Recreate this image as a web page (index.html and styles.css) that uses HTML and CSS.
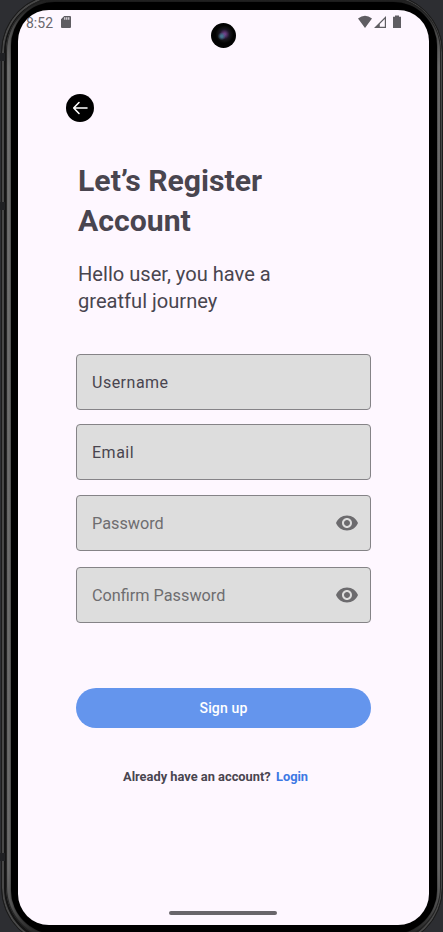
FILE: index.html
```html
<!DOCTYPE html>
<html lang="en">
<head>
<meta charset="utf-8">
<title>Register</title>
<link rel="stylesheet" href="styles.css">
</head>
<body>
<div class="device">
  <div class="rim"></div>
  <div class="shell"></div>
  <div class="bezel"></div>
  <span class="side-key key-top"></span>
  <span class="side-key key-mid"></span>
  <span class="side-key key-low"></span>
  <main class="screen">
    <header class="status">
      <span class="time">8:52</span>
      <svg class="sd" width="10" height="12" viewBox="0 0 10 12"><path fill="#5f5d62" fill-rule="evenodd" d="M3.2 0H9q1 0 1 1v10q0 1-1 1H1q-1 0-1-1V3.2zM3.3 1.3v2.5h1V1.3zm2 0v2.5h1V1.3zm2 0v2.5h1V1.3z"/></svg>
      <svg class="signals" width="44" height="14" viewBox="0 0 44 14"><path fill="#5f5d62" d="M0 3.5Q7-2.2 14 3.5L7 13zM28 1v12H16zM26.8 4 21.8 9V11.8h5z" fill-rule="evenodd"/><path fill="#5f5d62" d="M35 1.8h2V.4h4v1.4h2V13h-8z"/></svg>
    </header>
    <span class="camera"></span>
    <button class="back" aria-label="Back"><svg width="16" height="14" viewBox="0 0 16 14"><path d="M7 1.5 1.7 7 7 12.5M1.7 7H15" fill="none" stroke="#fff" stroke-width="1.6" stroke-linecap="round" stroke-linejoin="round"/></svg></button>
    <h1>Let’s Register<br>Account</h1>
    <p class="intro">Hello user, you have a<br>greatful journey</p>
    <form class="form">
      <div class="field">Username</div>
      <div class="field">Email</div>
      <div class="field secret">Password<svg class="eye" width="24" height="24" viewBox="0 0 24 24"><path d="M12 4.5C7 4.5 2.73 7.61 1 12c1.73 4.39 6 7.5 11 7.5s9.27-3.11 11-7.5c-1.73-4.39-6-7.5-11-7.5zM12 17c-2.76 0-5-2.24-5-5s2.24-5 5-5 5 2.24 5 5-2.24 5-5 5zm0-8c-1.66 0-3 1.34-3 3s1.34 3 3 3 3-1.34 3-3-1.34-3-3-3z"/></svg></div>
      <div class="field secret">Confirm Password<svg class="eye" width="24" height="24" viewBox="0 0 24 24"><path d="M12 4.5C7 4.5 2.73 7.61 1 12c1.73 4.39 6 7.5 11 7.5s9.27-3.11 11-7.5c-1.73-4.39-6-7.5-11-7.5zM12 17c-2.76 0-5-2.24-5-5s2.24-5 5-5 5 2.24 5 5-2.24 5-5 5zm0-8c-1.66 0-3 1.34-3 3s1.34 3 3 3 3-1.34 3-3-1.34-3-3-3z"/></svg></div>
      <button class="signup" type="button">Sign up</button>
    </form>
    <p class="login">Already have an account? <a>Login</a></p>
    <span class="home-bar"></span>
  </main>
</div>
</body>
</html>
```
FILE: styles.css
```css
* { box-sizing: border-box; }
body { margin: 0; background: #2d2e32; font-family: Roboto, sans-serif; color: #49454f; }
.device { position: relative; width: 443px; height: 932px; overflow: hidden; padding: 10px 14px 7px 18px; }
.rim {
  position: absolute; inset: -6px 0 -14px 1px; border-radius: 58px; background: #141414;
  border: 1px solid #1c1c1c; box-shadow: inset 0 0 0 2px #484848;
}
.shell {
  position: absolute; inset: -3px 2px -9px 6px; border-radius: 54px;
  background: linear-gradient(#1c1c1c, #505050 30px, #707070 70px, #6a6a6a 870px, #555 910px, #181818);
  box-shadow: inset 0 0 1px 1px #1f1f1f;
}
.bezel { position: absolute; inset: 2px 6px -2px 11px; border-radius: 44px; background: #000; box-shadow: 0 0 2px 0 #0b0b0b; }
.side-key { position: absolute; left: 0; width: 5px; height: 8px; background: #202124; }
.key-top { top: 53px; }
.key-mid { top: 202px; }
.key-low { top: 853px; }
.screen {
  position: relative; display: flex; flex-direction: column; height: 915px; width: 411px;
  padding: 0 58px; background: #fef7ff; border-radius: 31px; overflow: hidden;
}
.status { display: flex; align-items: center; height: 24px; margin: 0 -50px; color: #6a686d; font-size: 14px; }
.time { width: 35px; padding-top: 1px; }
.signals { margin-left: auto; margin-right: 19px; }
.camera {
  position: absolute; left: 193px; top: 13px; width: 25px; height: 25px; border-radius: 50%;
  background: radial-gradient(circle at 43% 53%, #44758f 0 1px, transparent 4px), radial-gradient(circle at 54% 45%, #6d3f86 0 1px, #1b1525 5px, #101010 7px, #030303 9px);
}
.back { display: grid; place-items: center; width: 28px; height: 28px; margin: 60px 0 0 -10px; padding: 0; border: 0; border-radius: 50%; background: #000; }
h1 { margin: 39px 0 0 2px; font-size: 30.2px; line-height: 40px; font-weight: 700; white-space: nowrap; }
.intro { margin: 20px 0 0 2px; font-size: 20.1px; line-height: 27px; white-space: nowrap; }
.form { margin-top: 39px; }
.field {
  display: flex; align-items: center; justify-content: space-between; width: 295px; height: 56px;
  margin-bottom: 14.4px; padding: 0 11px 0 15px; border: 1px solid #858387; border-radius: 4px;
  background: #ddd; font-size: 16px; letter-spacing: .5px;
}
.secret { margin-bottom: 16.1px; padding-top: 1px; color: #6e6d70; font-size: 16.25px; letter-spacing: 0; }
.eye { fill: #6c6b6e; }
.signup { display: block; width: 295px; height: 40px; margin: 65px 0 0; padding: 0; border: 0; border-radius: 20px; background: #6495ed; color: #fff; font: 500 14px Roboto, sans-serif; letter-spacing: .15px; }
.login { margin: 41px 0 0 47px; font-size: 12.85px; line-height: 16px; font-weight: 700; white-space: nowrap; }
.login a { margin-left: 2px; color: #3c78e4; }
.home-bar { width: 108px; height: 4px; margin: auto auto 10px 93px; border-radius: 2px; background: #69666b; }
```
